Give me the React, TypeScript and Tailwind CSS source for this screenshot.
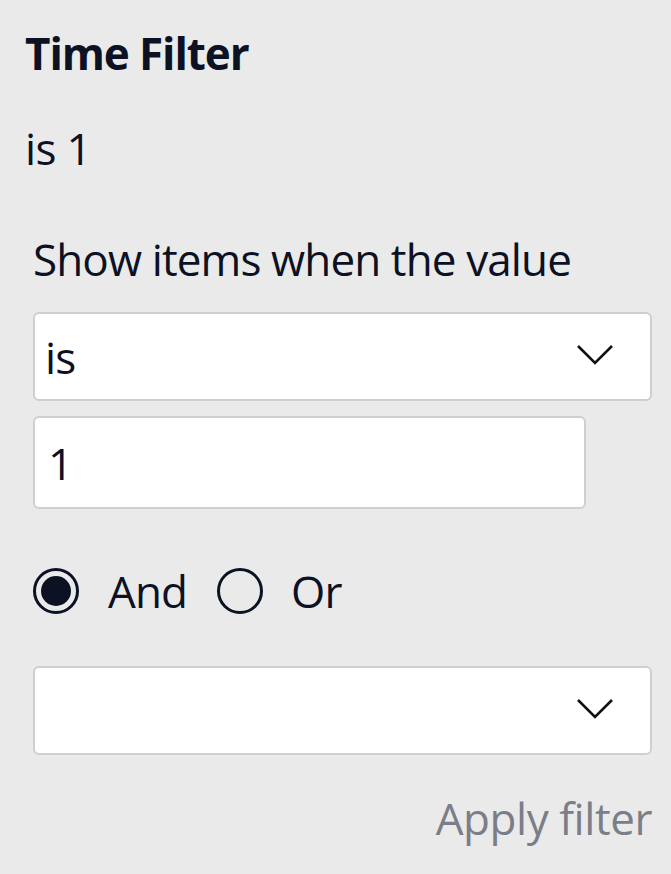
import { useState } from 'react';

function Chevron() {
  return (
    <svg width="38" height="22" viewBox="0 0 38 22" fill="none" className="shrink-0 -mt-[4px]">
      <path d="M2 2 L19 19 L36 2" stroke="#111111" strokeWidth="2.6" />
    </svg>
  );
}

function Radio({ checked }: { checked: boolean }) {
  return (
    <span className="w-[46px] h-[46px] rounded-full border-[3px] border-[#0c1124] flex items-center justify-center shrink-0">
      {checked && <span className="w-[30px] h-[30px] rounded-full bg-[#0c1124]" />}
    </span>
  );
}

export default function App() {
  const [mode, setMode] = useState<'and' | 'or'>('and');

  return (
    <div
      className="min-h-screen bg-[#eaeaea] text-[#0c1124] pl-[25px] pr-[19px]"
      style={{ fontFamily: '"Open Sans", "Noto Sans", sans-serif' }}
    >
      <h1 className="text-[44px] font-bold leading-none pt-[31px] tracking-[-0.025em]">Time Filter</h1>
      <p className="text-[44px] leading-none mt-[51px] tracking-[-0.015em]">is 1</p>

      <div className="pl-[8px] mt-[67px]">
        <p className="text-[44px] leading-none tracking-[-0.02em]">Show items when the value</p>

        <div className="mt-[31px] h-[89px] bg-white border-2 border-[#cfcfcf] rounded-[6px] flex items-center justify-between pl-[10px] pr-[36px]">
          <span className="text-[44px] leading-none tracking-[-0.02em]">is</span>
          <Chevron />
        </div>

        <div className="mt-[15px] w-[553px] h-[93px] bg-white border-2 border-[#cfcfcf] rounded-[6px] flex items-center pl-[13px]">
          <span className="text-[44px] leading-none">1</span>
        </div>

        <div className="mt-[59px] flex items-center h-[46px]">
          <button onClick={() => setMode('and')} className="flex items-center">
            <Radio checked={mode === 'and'} />
            <span className="text-[44px] leading-none ml-[29px] tracking-[-0.02em]">And</span>
          </button>
          <button onClick={() => setMode('or')} className="flex items-center ml-[30px]">
            <Radio checked={mode === 'or'} />
            <span className="text-[44px] leading-none ml-[28px] tracking-[-0.02em]">Or</span>
          </button>
        </div>

        <div className="mt-[52px] h-[89px] bg-white border-2 border-[#cfcfcf] rounded-[6px] flex items-center justify-end pr-[36px]">
          <Chevron />
        </div>

        <div className="mt-[41px] flex justify-end">
          <span className="text-[44px] leading-none text-[#7b7e89] tracking-[-0.01em]">Apply filter</span>
        </div>
      </div>
    </div>
  );
}
